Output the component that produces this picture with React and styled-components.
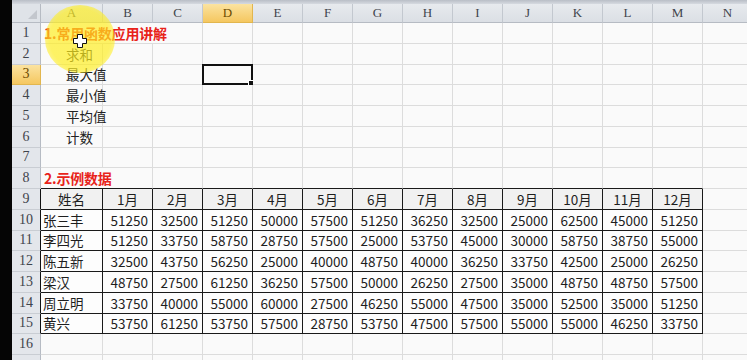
import React from "react";
import styled, { createGlobalStyle } from "styled-components";

const GlobalStyle = createGlobalStyle`
  html, body {
    margin: 0;
    padding: 0;
    background: #000;
    overflow: hidden;
  }
  body {
    font-family: "Noto Sans CJK SC", "Noto Sans", sans-serif;
  }
`;

const COLS = ["A", "B", "C", "D", "E", "F", "G", "H", "I", "J", "K", "L", "M", "N"];
const MONTHS = ["1月", "2月", "3月", "4月", "5月", "6月", "7月", "8月", "9月", "10月", "11月", "12月"];

const people = [
  ["张三丰", 51250, 32500, 51250, 50000, 57500, 51250, 36250, 32500, 25000, 62500, 45000, 51250],
  ["李四光", 51250, 33750, 58750, 28750, 57500, 25000, 53750, 45000, 30000, 58750, 38750, 55000],
  ["陈五新", 32500, 43750, 56250, 25000, 40000, 48750, 40000, 36250, 33750, 42500, 25000, 26250],
  ["梁汉", 48750, 27500, 61250, 36250, 57500, 50000, 26250, 27500, 35000, 48750, 48750, 57500],
  ["周立明", 33750, 40000, 55000, 60000, 27500, 46250, 55000, 47500, 35000, 52500, 35000, 51250],
  ["黄兴", 53750, 61250, 53750, 57500, 28750, 53750, 47500, 57500, 55000, 55000, 46250, 33750],
];

const labels = { 2: "求和", 3: "最大值", 4: "最小值", 5: "平均值", 6: "计数" };

const Frame = styled.div`
  display: flex;
  width: 747px;
  height: 360px;
  overflow: hidden;
`;

const BlackStrip = styled.div`
  width: 12px;
  flex: none;
  background: #050505;
`;

const Main = styled.div`
  flex: 1;
  display: flex;
  flex-direction: column;
  background: #fafafa;
  overflow: hidden;
`;

const TopBar = styled.div`
  height: 4px;
  flex: none;
  background: linear-gradient(#b9bec6, #d6dae0);
`;

const SheetWrap = styled.div`
  position: relative;
  flex: 1;
`;

const Sheet = styled.div`
  display: grid;
  grid-template-columns: 29px 62px repeat(13, 50px);
  grid-template-rows: 19px;
  grid-auto-rows: 20.75px;
  width: 800px;
`;

const Corner = styled.div`
  position: relative;
  background: #dfe3e8;
  border-right: 1px solid #b6bbc3;
  border-bottom: 1px solid #b6bbc3;
  box-sizing: border-box;
  &::after {
    content: "";
    position: absolute;
    right: 3px;
    bottom: 3px;
    border-left: 9px solid transparent;
    border-bottom: 9px solid #c3c7cd;
  }
`;

const ColHead = styled.div`
  box-sizing: border-box;
  display: flex;
  align-items: center;
  justify-content: center;
  font-family: "Liberation Serif", "DejaVu Serif", serif;
  font-size: 13px;
  color: ${(p) => (p.$active ? "#6b4a00" : "#3f444c")};
  background: ${(p) =>
    p.$active ? "linear-gradient(#fbe3a0, #f5c760)" : "linear-gradient(#e7eaee, #dbdfe5)"};
  border-right: 1px solid ${(p) => (p.$active ? "#e2b64e" : "#c3c8cf")};
  border-bottom: 1px solid ${(p) => (p.$active ? "#e2b64e" : "#b6bbc3")};
`;

const RowHead = styled.div`
  box-sizing: border-box;
  display: flex;
  align-items: center;
  justify-content: center;
  font-family: "Liberation Serif", "DejaVu Serif", serif;
  font-size: 14px;
  color: ${(p) => (p.$active ? "#6b4a00" : "#3f444c")};
  background: ${(p) => (p.$active ? "linear-gradient(#fbe3a0, #f5c760)" : "#e3e6eb")};
  border-right: 1px solid ${(p) => (p.$edge ? "#111" : p.$active ? "#e2b64e" : "#b6bbc3")};
  border-bottom: 1px solid ${(p) => (p.$active ? "#e2b64e" : "#c9cdd3")};
`;

const Cell = styled.div`
  box-sizing: border-box;
  position: relative;
  z-index: ${(p) => (p.$raised ? 1 : "auto")};
  display: flex;
  align-items: center;
  white-space: nowrap;
  grid-column: ${(p) => (p.$span ? `span ${p.$span}` : "auto")};
  justify-content: ${(p) =>
    p.$align === "right" ? "flex-end" : p.$align === "center" ? "center" : "flex-start"};
  padding: 0 ${(p) => (p.$align === "right" ? "4px" : "2px")} 0 ${(p) => p.$indent || 2}px;
  font-size: 13.5px;
  color: #1e1e1e;
  background: ${(p) => (p.$head ? "#f1f1f1" : p.$boxed ? "#fdfdfd" : "#fafafa")};
  border-right: 1px solid ${(p) => (p.$boxed ? "#1a1a1a" : "#dcdcdc")};
  border-bottom: 1px solid ${(p) => (p.$boxed || p.$topEdge ? "#1a1a1a" : "#dcdcdc")};
`;

const Label = styled.span`
  flex: none;
  font-size: 13.5px;
  color: #222;
`;

const Title = styled.span`
  font-weight: 700;
  font-size: 14px;
  color: #e8231a;
  letter-spacing: -0.2px;
`;

const Selected = styled.div`
  position: absolute;
  left: -1px;
  top: -1px;
  right: -1px;
  bottom: -1px;
  border: 2px solid #111;
  &::after {
    content: "";
    position: absolute;
    right: -4px;
    bottom: -4px;
    width: 5px;
    height: 5px;
    background: #111;
    border: 1px solid #fff;
  }
`;

const Highlight = styled.div`
  position: absolute;
  z-index: 2;
  left: 33px;
  top: 1px;
  width: 70px;
  height: 68px;
  border-radius: 50%;
  background: radial-gradient(circle, rgba(255, 238, 30, 0.68) 62%, rgba(255, 238, 30, 0.4) 82%, rgba(255, 238, 30, 0) 100%);
  pointer-events: none;
`;

const Cursor = styled.svg`
  position: absolute;
  z-index: 3;
  left: 61px;
  top: 30px;
`;

const MoveCursor = () => (
  <Cursor width="14" height="14" viewBox="0 0 14 14">
    <path
      d="M4.5 0.5h5v4h4v5h-4v4h-5v-4h-4v-5h4z"
      fill="#fff"
      stroke="#111"
      strokeWidth="1"
    />
  </Cursor>
);

const renderRow = (r) => {
  const cells = [];
  const tableRow = r >= 9 && r <= 15;
  cells.push(
    <RowHead key="h" $active={r === 3} $edge={tableRow}>
      {r <= 16 ? r : ""}
    </RowHead>
  );

  if (r === 1 || r === 8) {
    const span = r === 1 ? 3 : 2;
    cells.push(
      <Cell key="t" $span={span} $topEdge={r === 8} $indent={3}>
        <Title>{r === 1 ? "1.常用函数应用讲解" : "2.示例数据"}</Title>
      </Cell>
    );
    for (let c = span; c < COLS.length; c++) {
      cells.push(<Cell key={c} $topEdge={r === 8 && c < 13} />);
    }
    return cells;
  }

  COLS.forEach((col, c) => {
    let content = null;
    let align;
    let indent;
    let head = false;
    let raised = false;
    const boxed = tableRow && c < 13;
    if (labels[r] && c === 0) {
      content = <Label>{labels[r]}</Label>;
      indent = 25;
      raised = true;
    }
    if (r === 9 && c < 13) {
      head = true;
      align = "center";
      content = c === 0 ? "姓名" : MONTHS[c - 1];
    }
    if (r >= 10 && r <= 15 && c < 13) {
      const row = people[r - 10];
      content = row[c];
      align = c === 0 ? "left" : "right";
    }
    cells.push(
      <Cell
        key={c}
        $boxed={boxed}
        $head={head}
        $align={align}
        $indent={indent}
        $raised={raised}
      >
        {content}
        {r === 3 && col === "D" && <Selected />}
      </Cell>
    );
  });
  return cells;
};

export default function App() {
  const rows = Array.from({ length: 17 }, (_, i) => i + 1);
  return (
    <>
      <GlobalStyle />
      <Frame>
        <BlackStrip />
        <Main>
          <TopBar />
          <SheetWrap>
            <Sheet>
              <Corner />
              {COLS.map((c) => (
                <ColHead key={c} $active={c === "D"}>
                  {c}
                </ColHead>
              ))}
              {rows.map((r) => (
                <React.Fragment key={r}>{renderRow(r)}</React.Fragment>
              ))}
            </Sheet>
            <Highlight />
            <MoveCursor />
          </SheetWrap>
        </Main>
      </Frame>
    </>
  );
}
